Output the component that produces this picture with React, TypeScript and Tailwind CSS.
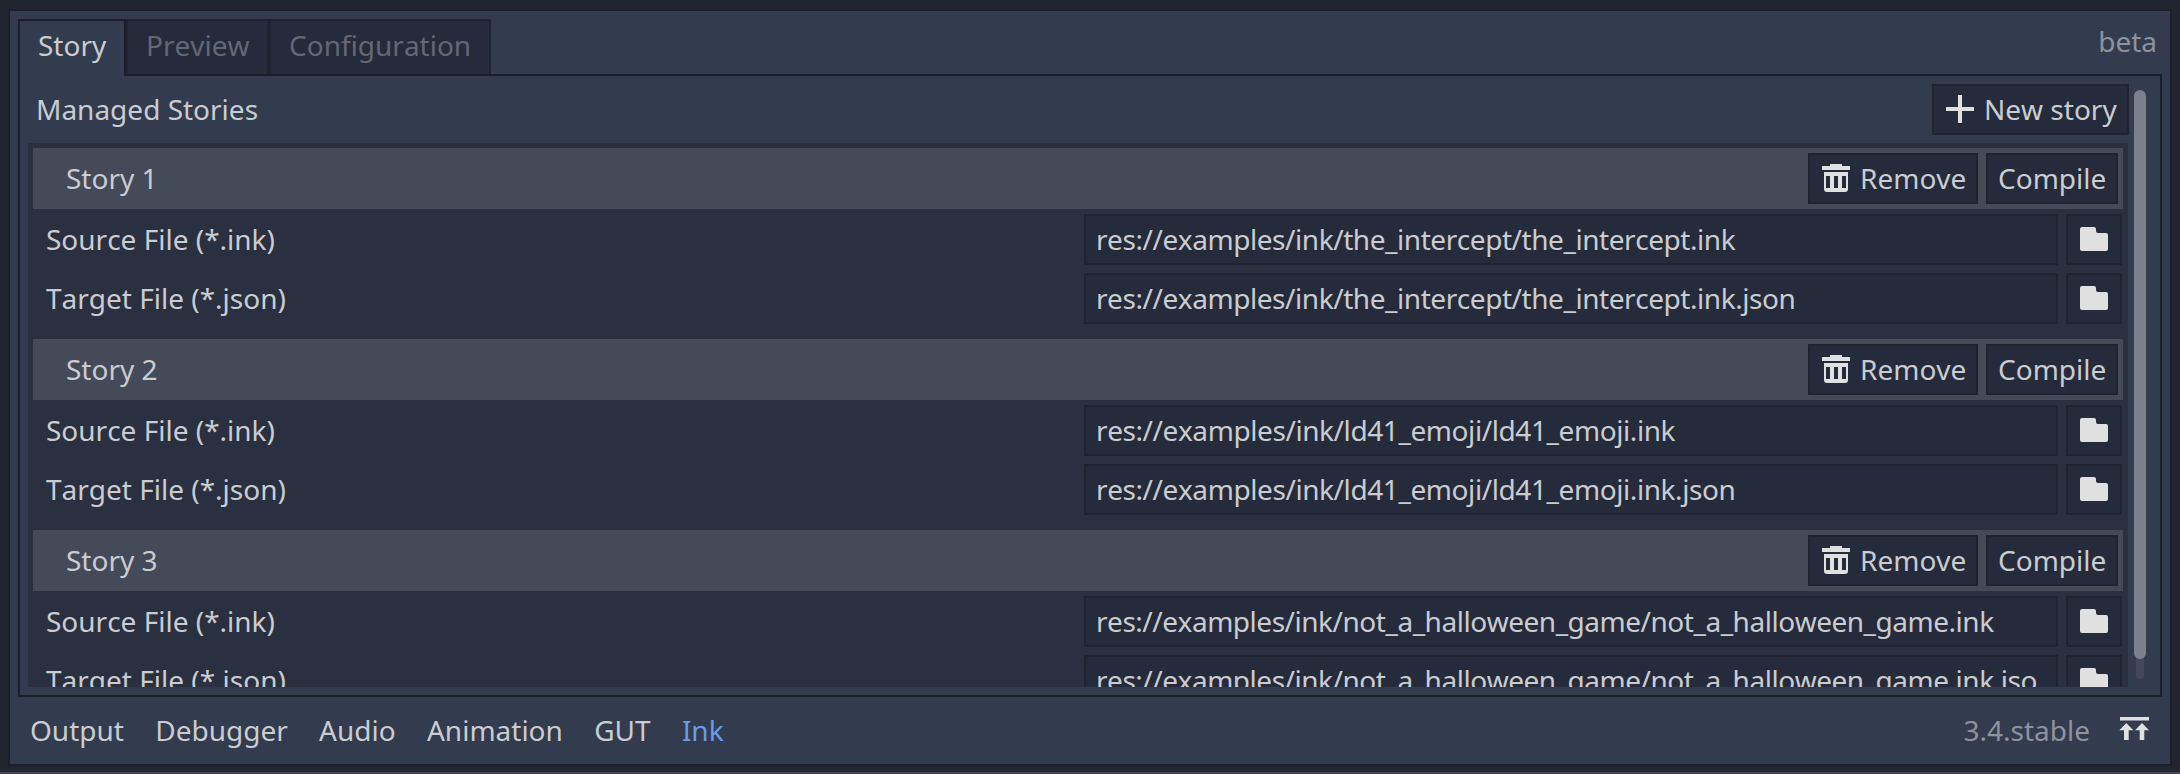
import React from "react";

const stories = [
  {
    name: "Story 1",
    source: "res://examples/ink/the_intercept/the_intercept.ink",
    target: "res://examples/ink/the_intercept/the_intercept.ink.json",
    tracking: "tracking-[-0.442px]",
  },
  {
    name: "Story 2",
    source: "res://examples/ink/ld41_emoji/ld41_emoji.ink",
    target: "res://examples/ink/ld41_emoji/ld41_emoji.ink.json",
    tracking: "tracking-[-0.418px]",
  },
  {
    name: "Story 3",
    source: "res://examples/ink/not_a_halloween_game/not_a_halloween_game.ink",
    target: "res://examples/ink/not_a_halloween_game/not_a_halloween_game.ink.jso",
    tracking: "tracking-[-0.475px]",
  },
];

const PlusIcon = () => (
  <svg width="28" height="28" viewBox="0 0 28 28" fill="#e0e0e0" className="shrink-0">
    <path d="M12 0h4v12h12v4H16v12h-4V16H0v-4h12z" />
  </svg>
);

const TrashIcon = () => (
  <svg width="28" height="28" viewBox="0 0 28 28" fill="#e0e0e0" className="shrink-0">
    <path d="M8 0h12v2h8v4H0V2h8z" />
    <path fillRule="evenodd" d="M2 8h24v17a3 3 0 0 1-3 3H5a3 3 0 0 1-3-3zM4 12v12h4V12zM12 12v12h4V12zM20 12v12h4V12z" />
  </svg>
);

const FolderIcon = () => (
  <svg width="28" height="24" viewBox="0 0 28 24" fill="#e0e0e0" className="shrink-0">
    <path d="M2 0h12a2 2 0 0 1 2 2v2a2 2 0 0 0 2 2h8a2 2 0 0 1 2 2v14a2 2 0 0 1-2 2H2a2 2 0 0 1-2-2V2a2 2 0 0 1 2-2z" />
  </svg>
);

const ExpandIcon = () => (
  <svg width="30" height="24" viewBox="0 0 30 24" fill="#e0e0e0" className="shrink-0">
    <path d="M1 0h29v3.500H1zM7.300 6l7 7.300H9.700V23H5v-9.700H.3zM23 6l7 7.300h-4.700V23h-4.600v-9.700H16z" />
  </svg>
);

function FileRow({ label, value, tracking }: { label: string; value: string; tracking: string }) {
  return (
    <div className="flex h-[51px] gap-2">
      <div className="w-[1035px] shrink-0 pl-[5px] pt-1.5">{label}</div>
      <div className={`w-[974px] shrink-0 border-2 border-[#20242f] bg-[#262b3b] pl-[10px] pt-1 ${tracking}`}>{value}</div>
      <button className="flex w-14 shrink-0 items-start justify-center border-2 border-[#20242f] bg-[#262b3b] pt-[11px]">
        <FolderIcon />
      </button>
    </div>
  );
}

function Story({ name, source, target, tracking }: (typeof stories)[number]) {
  return (
    <section className="flex h-[191px] shrink-0 flex-col">
      <header className="flex h-[61px] gap-2 bg-[#444a58] p-[5px]">
        <h3 className="flex-1 pl-7 pt-1.5">{name}</h3>
        <button className="flex w-[170px] border-2 border-[#20242f] bg-[#262b3b] pl-3 pt-1">
          <span className="pt-[5px]"><TrashIcon /></span>
          <span className="ml-[10px]">Remove</span>
        </button>
        <button className="flex w-[132px] border-2 border-[#20242f] bg-[#262b3b] pl-[10px] pt-1">Compile</button>
      </header>
      <div className="mt-[5px] flex flex-col gap-2 pl-[8px]">
        <FileRow label="Source File (*.ink)" value={source} tracking={tracking} />
        <FileRow label="Target File (*.json)" value={target} tracking={tracking} />
      </div>
    </section>
  );
}

export default function App() {
  return (
    <div className="flex h-[774px] w-[2180px] flex-col overflow-hidden whitespace-nowrap border-b-2 border-[#444853] bg-[#21252f] px-2 pb-1.5 pt-[9px] font-['Noto_Sans',sans-serif] text-[28px] leading-[38px] text-[#cacccf] [font-kerning:none]">
      <div className="flex flex-1 flex-col border-2 border-[#1b1f2a] bg-[#333b4e] px-2 pt-2">
        <div className="flex h-[57px] shrink-0">
          <div className="flex">
            <div className="z-10 h-[57px] w-[108px] border-2 border-b-0 border-[#1b1f2a] bg-[#333b4e] pl-[18px] pt-[5px]">Story</div>
            <div className="h-[55px] w-[143px] border-2 border-b-0 border-[#202430] bg-[#262b3b] pl-[18px] pt-[5px] text-[#636772]">Preview</div>
            <div className="h-[55px] w-[222px] border-2 border-b-0 border-[#202430] bg-[#262b3b] pl-[18px] pt-[5px] text-[#636772]">Configuration</div>
          </div>
          <div className="ml-auto pr-[5px] pt-[3px] text-[#8e929c]">beta</div>
        </div>
        <div className="-mt-0.5 flex h-[623px] w-[2144px] shrink-0 border-2 border-[#1b1f2a] px-2 pt-2">
          <div className="flex h-[603px] w-[2101px] flex-col">
            <div className="flex h-[51px] shrink-0 justify-between">
              <h2 className="pl-2 pt-1.5">Managed Stories</h2>
              <button className="flex w-[197px] border-2 border-[#20242f] bg-[#262b3b] pl-3 pt-1">
                <span className="pt-[5px]"><PlusIcon /></span>
                <span className="ml-[10px]">New story</span>
              </button>
            </div>
            <div className="mt-2 flex w-[2100px] flex-1 flex-col overflow-hidden bg-[#2a303f] px-[5px] pt-[5px]">
              {stories.map((s) => (
                <Story key={s.name} {...s} />
              ))}
            </div>
          </div>
          <div className="ml-[5px] mt-1.5 flex h-[589px] w-3 flex-col items-center">
            <div className="z-10 h-[569px] w-3 shrink-0 rounded-full bg-[#7b808b]" />
            <div className="-mt-2 h-7 w-2 shrink-0 rounded-b-full bg-[#444859]" />
          </div>
        </div>
        <footer className="flex h-[67px] pt-[14px]">
          <nav className="flex gap-[31.3px] pl-3">
            <span>Output</span>
            <span>Debugger</span>
            <span>Audio</span>
            <span>Animation</span>
            <span>GUT</span>
            <span className="text-[#699ce8]">Ink</span>
          </nav>
          <div className="ml-auto flex pr-[13px] text-[#8e929c]">
            <span>3.4.stable</span>
            <span className="ml-[29px] pt-[6px]"><ExpandIcon /></span>
          </div>
        </footer>
      </div>
    </div>
  );
}
